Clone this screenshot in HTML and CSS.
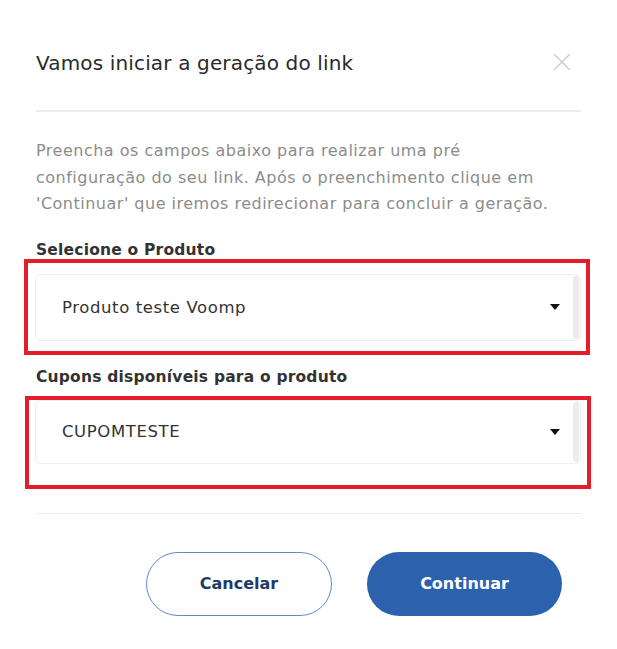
FILE: index.html
```html
<!DOCTYPE html>
<html lang="pt-BR">
<head>
<meta charset="utf-8">
<link rel="stylesheet" href="styles.css">
</head>
<body>
<div class="modal">
  <div class="header">
    <h1 class="title">Vamos iniciar a geração do link</h1>
    <button class="close" aria-label="Fechar">
      <svg width="18" height="18" viewBox="0 0 18 18"><path d="M1 1 L17 17 M17 1 L1 17" stroke="#cfcfcf" stroke-width="1.6" fill="none"/></svg>
    </button>
  </div>
  <div class="body">
    <p class="intro">Preencha os campos abaixo para realizar uma pré<br>configuração do seu link. Após o preenchimento clique em<br>'Continuar' que iremos redirecionar para concluir a geração.</p>
    <div class="label">Selecione o Produto</div>
    <div class="mark mark-1">
      <div class="select sel-1">
        <span class="value">Produto teste Voomp</span>
        <span class="caret"></span>
        <span class="scroll"></span>
      </div>
    </div>
    <div class="label label-2">Cupons disponíveis para o produto</div>
    <div class="mark mark-2">
      <div class="select sel-2">
        <span class="value">CUPOMTESTE</span>
        <span class="caret"></span>
        <span class="scroll"></span>
      </div>
    </div>
  </div>
  <div class="footer">
    <button class="btn btn-outline">Cancelar</button>
    <button class="btn btn-primary">Continuar</button>
  </div>
</div>
</body>
</html>
```
FILE: styles.css
```css
* { box-sizing: border-box; }
html, body { margin: 0; background: #fff; }
body {
  font-family: "DejaVu Sans", "Open Sans", sans-serif;
  color: #222;
}
.modal {
  width: 617px;
  padding: 0 36px;
}
.header {
  display: flex;
  justify-content: space-between;
  align-items: center;
  padding: 47px 0 31px;
  border-bottom: 2px solid #ececec;
}
.title {
  margin: 0;
  font-size: 20px;
  line-height: 32px;
  font-weight: 400;
  color: #2a2a2a;
  letter-spacing: 0.15px;
}
.close {
  border: 0;
  background: none;
  padding: 0;
  margin-right: 10px;
  margin-bottom: 2px;
  width: 18px;
  height: 18px;
  display: flex;
}
.intro {
  margin: 26px 0 0;
  font-size: 16px;
  line-height: 26.5px;
  color: #8c8c8c;
  letter-spacing: 0.5px;
}
.label {
  margin-top: 24px;
  font-size: 15.5px;
  line-height: 17px;
  font-weight: 700;
  color: #333;
  letter-spacing: 0.2px;
}
.label-2 { margin-top: 14px; }
.mark {
  border: 4px solid #e21e2b;
}
.mark-1 {
  margin: 0 -9px 0 -12px;
  padding: 11px 5px 10px 7px;
}
.mark-2 {
  margin: 10px -10px 0 -11px;
  padding: 0 6px 21px 6px;
}
.select {
  display: flex;
  align-items: center;
  border: 1px solid #efefef;
  border-radius: 6px;
  padding: 1px 1px 1px 26px;
  background: #fff;
}
.sel-1 { height: 67px; }
.sel-2 { height: 64px; }
.value {
  flex: 1;
  font-size: 16.5px;
  color: #333;
  letter-spacing: 0.6px;
}
.caret {
  width: 0;
  height: 0;
  border-left: 5.5px solid transparent;
  border-right: 5.5px solid transparent;
  border-top: 6px solid #111;
  margin-right: 13px;
}
.scroll {
  align-self: stretch;
  width: 6px;
  border-radius: 3px;
  background: #ececec;
}
.footer {
  margin-top: 24px;
  border-top: 1px solid #ececec;
  padding: 38px 19px 0 0;
  display: flex;
  justify-content: flex-end;
  gap: 35px;
}
.btn {
  height: 64px;
  border-radius: 32px;
  font-family: inherit;
  font-size: 16px;
  font-weight: 700;
  letter-spacing: 0;
}
.btn-outline {
  width: 186px;
  background: #fff;
  border: 1px solid #5d8ac8;
  color: #1d3a6b;
}
.btn-primary {
  width: 195px;
  background: #2c62ad;
  border: 0;
  color: #fff;
}
```
